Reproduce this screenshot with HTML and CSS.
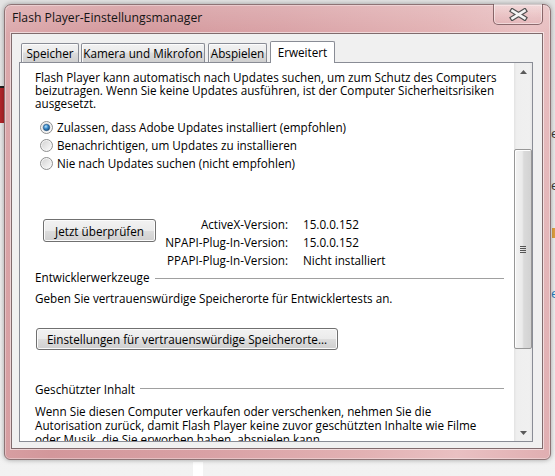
FILE: index.html
```html
<!DOCTYPE html>
<html lang="de">
<head>
<meta charset="utf-8">
<title>Flash Player-Einstellungsmanager</title>
<link rel="stylesheet" href="styles.css">
</head>
<body>
<div class="desktop">
  <div class="bg-red"></div>
  <span class="bg-e bg-e1">e</span>
  <span class="bg-e bg-e2">e</span>
  <span class="bg-bar"></span>
  <span class="bg-e bg-e3">e</span>
  <div class="bg-white"></div>

  <div class="window">
    <div class="titlebar">
      <span class="title">Flash Player-Einstellungsmanager</span>
      <div class="close">
        <svg width="19" height="13" viewBox="0 0 19 13">
          <path d="M3.5 2.8 L15.5 10.2 M15.5 2.8 L3.5 10.2" stroke="#505050" stroke-width="5" stroke-linecap="square" fill="none"/>
          <path d="M3.5 2.8 L15.5 10.2 M15.5 2.8 L3.5 10.2" stroke="#f4f4f4" stroke-width="2.6" stroke-linecap="square" fill="none"/>
        </svg>
      </div>
    </div>

    <div class="client">
      <div class="tabs">
        <div class="tab tab-speicher">Speicher</div>
        <div class="tab tab-kamera">Kamera und Mikrofon</div>
        <div class="tab tab-abspielen">Abspielen</div>
        <div class="tab tab-erweitert active">Erweitert</div>
      </div>

      <div class="panel">
        <div class="content">
          <p class="para para-top">Flash Player kann automatisch nach Updates suchen, um zum Schutz des Computers<br>beizutragen. Wenn Sie keine Updates ausführen, ist der Computer Sicherheitsrisiken<br>ausgesetzt.</p>

          <div class="radios">
            <div class="radio-row">
              <svg class="radio" width="13" height="13" viewBox="0 0 13 13">
                <defs>
                  <linearGradient id="rfill1" x1="0" y1="0" x2="1" y2="1"><stop offset="0" stop-color="#d4d4d4"/><stop offset="1" stop-color="#fafafa"/></linearGradient>
                  <radialGradient id="rdot" cx="40%" cy="35%" r="70%"><stop offset="0" stop-color="#b9e3fa"/><stop offset="0.45" stop-color="#3d8fd0"/><stop offset="1" stop-color="#17456f"/></radialGradient>
                </defs>
                <circle cx="6.5" cy="6.5" r="6" fill="#f4f4f4" stroke="#8e8f8f"/>
                <circle cx="6.5" cy="6.5" r="4.5" fill="url(#rfill1)"/>
                <circle cx="6.5" cy="6.5" r="3.2" fill="url(#rdot)" stroke="#1e4f80" stroke-width="0.6"/>
              </svg>
              <span>Zulassen, dass Adobe Updates installiert (empfohlen)</span>
            </div>
            <div class="radio-row">
              <svg class="radio" width="13" height="13" viewBox="0 0 13 13">
                <defs>
                  <linearGradient id="rfill2" x1="0" y1="0" x2="1" y2="1"><stop offset="0" stop-color="#d4d4d4"/><stop offset="1" stop-color="#fafafa"/></linearGradient>
                </defs>
                <circle cx="6.5" cy="6.5" r="6" fill="#f4f4f4" stroke="#8e8f8f"/>
                <circle cx="6.5" cy="6.5" r="4.5" fill="url(#rfill2)"/>
              </svg>
              <span>Benachrichtigen, um Updates zu installieren</span>
            </div>
            <div class="radio-row">
              <svg class="radio" width="13" height="13" viewBox="0 0 13 13">
                <defs>
                  <linearGradient id="rfill3" x1="0" y1="0" x2="1" y2="1"><stop offset="0" stop-color="#d4d4d4"/><stop offset="1" stop-color="#fafafa"/></linearGradient>
                </defs>
                <circle cx="6.5" cy="6.5" r="6" fill="#f4f4f4" stroke="#8e8f8f"/>
                <circle cx="6.5" cy="6.5" r="4.5" fill="url(#rfill3)"/>
              </svg>
              <span>Nie nach Updates suchen (nicht empfohlen)</span>
            </div>
          </div>

          <div class="update-row">
            <button class="btn btn-check">Jetzt überprüfen</button>
            <div class="versions">
              <span class="v-label">ActiveX-Version:</span><span>15.0.0.152</span>
              <span class="v-label">NPAPI-Plug-In-Version:</span><span>15.0.0.152</span>
              <span class="v-label">PPAPI-Plug-In-Version:</span><span>Nicht installiert</span>
            </div>
          </div>

          <div class="legend legend-dev"><span>Entwicklerwerkzeuge</span><i class="rule"></i></div>
          <p class="para para-dev">Geben Sie vertrauenswürdige Speicherorte für Entwicklertests an.</p>
          <button class="btn btn-trusted">Einstellungen für vertrauenswürdige Speicherorte...</button>

          <div class="legend legend-protected"><span>Geschützter Inhalt</span><i class="rule"></i></div>
          <p class="para para-bottom">Wenn Sie diesen Computer verkaufen oder verschenken, nehmen Sie die<br>Autorisation zurück, damit Flash Player keine zuvor geschützten Inhalte wie Filme<br>oder Musik, die Sie erworben haben, abspielen kann.</p>
        </div>

        <div class="scrollbar">
          <div class="sb-btn"><svg width="7" height="4" viewBox="0 0 7 4"><path d="M0 4 L3.5 0 L7 4 Z" fill="#5a5a5a"/></svg></div>
          <div class="sb-thumb">
            <svg width="6" height="7" viewBox="0 0 6 7"><path d="M0 0.5H6M0 2.5H6M0 4.5H6M0 6.5H6" stroke="#555" stroke-width="1"/></svg>
          </div>
          <div class="sb-btn sb-down"><svg width="7" height="4" viewBox="0 0 7 4"><path d="M0 0 L7 0 L3.5 4 Z" fill="#5a5a5a"/></svg></div>
        </div>
      </div>
    </div>
  </div>
</div>
</body>
</html>
```

FILE: styles.css
```css
* { box-sizing: border-box; }

html, body {
  margin: 0;
  padding: 0;
}

body {
  width: 555px;
  height: 476px;
  overflow: clip;
  font-family: "Open Sans", "Noto Sans", "Liberation Sans", sans-serif;
  font-size: 11.7px;
  color: #000;
}

.desktop {
  position: relative;
  width: 555px;
  height: 476px;
  padding: 4px 0 0 4px;
  background: linear-gradient(#e4e4e4 0%, #ececec 40%, #f2f2f2 100%);
  overflow: clip;
}

/* fragments of the desktop behind the window */
.bg-red {
  position: absolute;
  left: 0;
  top: 86px;
  width: 4px;
  height: 37px;
  background: #b3262a;
  border-top: 2px solid #222;
}
.bg-e {
  position: absolute;
  left: 551px;
  font-size: 13px;
  color: #3a3a3a;
}
.bg-e1 { top: 124px; }
.bg-e2 { top: 176px; }
.bg-e3 { top: 284px; color: #1f7fc0; }
.bg-bar {
  position: absolute;
  left: 552px;
  top: 228px;
  width: 3px;
  height: 10px;
  background: #e0a040;
}
.bg-white {
  position: absolute;
  left: 193px;
  top: 462px;
  width: 10px;
  height: 14px;
  background: #fff;
}

/* window frame */
.window {
  position: relative;
  width: 547px;
  height: 456px;
  display: flex;
  flex-direction: column;
  padding: 0 7px 10px 6px;
  border: 1px solid #8d7375;
  border-radius: 7px 7px 6px 6px;
  background:
    linear-gradient(rgba(255,255,255,0.18), rgba(255,255,255,0) 30px),
    linear-gradient(100deg, #dca9ac 0%, #d3979b 20%, #d9a1a5 45%, #e2b1b3 70%, #e9c0c2 85%, #e0aeb1 100%);
  box-shadow: 0 0 5px rgba(0,0,0,0.35), inset 0 0 0 1px rgba(255,255,255,0.35);
}

.titlebar {
  height: 28px;
  display: flex;
  justify-content: space-between;
  align-items: flex-start;
}

.title {
  margin: 6px 0 0 1px;
  font-size: 12.2px;
  line-height: 14px;
  color: #141414;
}

.close {
  width: 50px;
  height: 21px;
  margin-top: -1px;
  display: flex;
  align-items: center;
  justify-content: center;
  border: 1px solid rgba(95,60,64,0.7);
  border-top: none;
  border-radius: 0 0 5px 5px;
  background: linear-gradient(rgba(255,255,255,0.3), rgba(240,205,207,0.25) 50%, rgba(215,160,164,0.3));
  box-shadow: inset 0 0 0 1px rgba(255,255,255,0.45);
}

/* client area */
.client {
  flex: 1;
  min-height: 0;
  display: flex;
  flex-direction: column;
  background: #f0f0f0;
  border: 1px solid #806b6d;
  box-shadow: 0 0 0 1px rgba(255,255,255,0.55);
}

.tabs {
  position: relative;
  z-index: 1;
  height: 29px;
  display: flex;
  align-items: flex-end;
  padding-left: 9px;
}

.tab {
  height: 19px;
  margin-bottom: 1px;
  margin-right: 3px;
  border: 1px solid #898c95;
  border-bottom: none;
  border-radius: 2px 2px 0 0;
  background: linear-gradient(#f2f2f2 0%, #ebebeb 45%, #dddddd 50%, #cfcfcf 100%);
  box-shadow: inset 1px 1px 0 rgba(255,255,255,0.8);
  text-align: center;
  line-height: 18px;
  white-space: nowrap;
}
.tab-speicher { width: 58px; margin-right: 2px; }
.tab-kamera { width: 124px; }
.tab-abspielen { width: 59px; }
.tab-erweitert { width: 65px; }

.tab.active {
  height: 22px;
  margin-bottom: 0;
  background: #fff;
  box-shadow: none;
  line-height: 20px;
}

.panel {
  flex: 1;
  min-height: 0;
  display: flex;
  margin: -1px 9px 6px 7px;
  border: 1px solid #898c95;
  background: #fff;
  overflow: clip;
}

.content {
  flex: 1;
  min-height: 0;
  padding: 8px 10px 0 15px;
  overflow: clip;
  white-space: nowrap;
}

.para {
  margin: 0;
  line-height: 13px;
}

.radios {
  margin-top: 8px;
}
.radio-row {
  height: 18px;
  display: flex;
  align-items: center;
  padding-left: 5px;
}
.radio {
  flex: none;
  margin-right: 4px;
}

.update-row {
  display: flex;
  align-items: flex-start;
  margin-top: 43px;
  padding-left: 8px;
}

.btn {
  display: block;
  font: inherit;
  color: #000;
  padding: 0;
  border: 1px solid #707070;
  border-radius: 3px;
  background: linear-gradient(#f2f2f2 0%, #ebebeb 50%, #dddddd 51%, #cfcfcf 100%);
  box-shadow: inset 0 0 0 1px #fbfbfb;
  text-align: center;
}

.btn-check {
  width: 113px;
  height: 23px;
  margin-top: 4px;
}

.versions {
  display: grid;
  grid-template-columns: 132px auto;
  grid-auto-rows: 18px;
  column-gap: 15px;
  align-items: center;
}
.v-label {
  text-align: right;
}

.legend {
  display: flex;
  align-items: center;
  height: 14px;
  line-height: 14px;
  gap: 5px;
}
.legend .rule {
  flex: 1;
  height: 1px;
  margin-top: 2px;
  background: #a0a0a0;
}
.legend-dev { margin-top: 1px; }
.legend-protected { margin-top: 32px; }
.legend-protected .rule { margin-top: -1px; }

.para-dev {
  margin-top: 7px;
  line-height: 14px;
}

.btn-trusted {
  width: 302px;
  height: 22px;
  margin: 23px 0 0 1px;
}

.para-bottom {
  margin-top: 8px;
  line-height: 14px;
}

/* scrollbar */
.scrollbar {
  flex: none;
  width: 18px;
  display: flex;
  flex-direction: column;
  background: linear-gradient(to right, #e3e3e3 0%, #efefef 15%, #f0f0f0 85%, #e6e6e6 100%);
}
.sb-btn {
  height: 17px;
  display: flex;
  align-items: center;
  justify-content: center;
}
.sb-down {
  margin-top: auto;
}
.sb-thumb {
  height: 200px;
  margin-top: 69px;
  display: flex;
  align-items: center;
  justify-content: center;
  border: 1px solid #979797;
  border-radius: 2px;
  background: linear-gradient(to right, #f3f3f3 0%, #eaeaea 45%, #dadada 55%, #d2d2d2 100%);
  box-shadow: inset 1px 1px 0 #fdfdfd;
}
```
